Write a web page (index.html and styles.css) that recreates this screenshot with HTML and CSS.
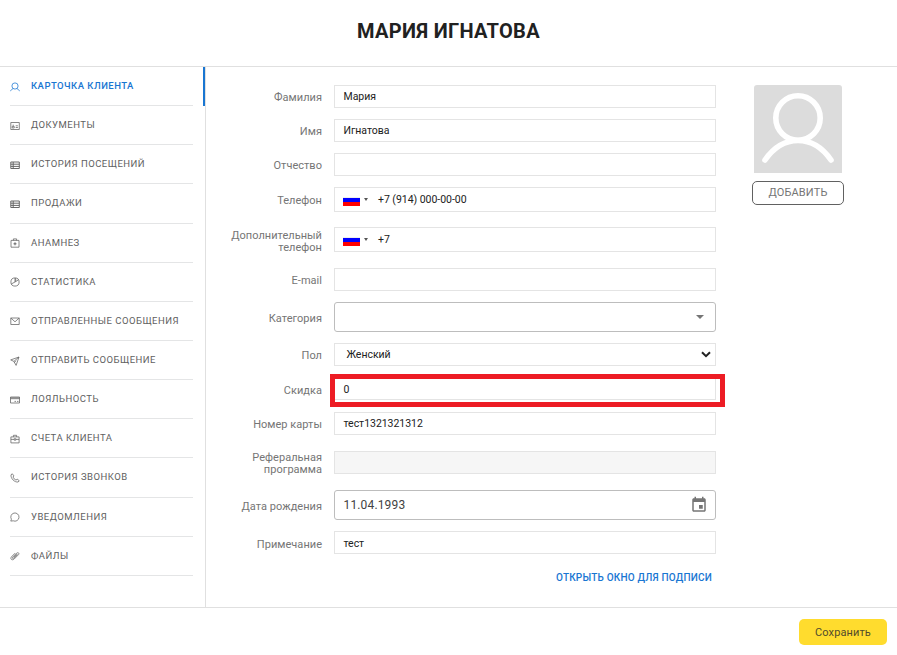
FILE: index.html
```html
<!DOCTYPE html>
<html lang="ru">
<head>
<meta charset="utf-8">
<title>Карточка клиента</title>
<link rel="stylesheet" href="styles.css">
</head>
<body>
<header class="header"><h1 class="title">МАРИЯ ИГНАТОВА</h1></header>
<main class="main">
  <nav class="sidebar">
    <a class="item active"><svg class="icon" viewBox="0 0 10 10"><circle cx="5" cy="4" r="3.100"/><path d="M.5 9.200c.4-1.300 1.500-2.200 2.800-2.500M9.500 9.200C9.100 7.900 8 7 6.700 6.700"/></svg><span>КАРТОЧКА КЛИЕНТА</span></a>
    <a class="item"><svg class="icon" viewBox="0 0 10 10"><path d="M.8 1.500h8.500v7H.8z"/><path d="M2.200 7V5.400h2V7zM3.200 3.600v1.600M5.700 4.800h2.200M5.700 6.500h2.200"/></svg><span>ДОКУМЕНТЫ</span></a>
    <a class="item"><svg class="icon heavy" viewBox="0 0 10 10"><path d="M.8 2h8.500v6.500H.8zM.8 4.200h8.500M.8 6.400h8.500M3.200 2v6.500"/></svg><span>ИСТОРИЯ ПОСЕЩЕНИЙ</span></a>
    <a class="item"><svg class="icon heavy" viewBox="0 0 10 10"><path d="M.8 2h8.500v6.500H.8zM.8 4.200h8.500M.8 6.400h8.500M3.200 2v6.500"/></svg><span>ПРОДАЖИ</span></a>
    <a class="item"><svg class="icon" viewBox="0 0 10 10"><path d="M1 2.400h8v6.800H1zM3.400 2.400V.9h3.200v1.500"/><path class="heavy" d="M5 4.300v3M3.500 5.800h3"/></svg><span>АНАМНЕЗ</span></a>
    <a class="item"><svg class="icon" viewBox="0 0 10 10"><circle cx="5" cy="5" r="4.100"/><path d="M5 1v4L1.200 7M5 5l3.500-2.200M5.700 1.200v3.100"/></svg><span>СТАТИСТИКА</span></a>
    <a class="item"><svg class="icon" viewBox="0 0 10 10"><path d="M.8 2h8.400v6.500H.8zM.8 2 5 5.800 9.200 2"/></svg><span>ОТПРАВЛЕННЫЕ СООБЩЕНИЯ</span></a>
    <a class="item"><svg class="icon" viewBox="0 0 10 10"><path d="M9 1 .7 3.900l3.200 1.500 2.200 4zM3.900 5.400 9 1M4.400 6.500l1.600-1.800"/></svg><span>ОТПРАВИТЬ СООБЩЕНИЕ</span></a>
    <a class="item"><svg class="icon" viewBox="0 0 10 10"><path d="M.5 2h9v6h-9zM.5 2.800h9M.5 3.700h9M4.500 6.400H6M7 6.400h1.500"/></svg><span>ЛОЯЛЬНОСТЬ</span></a>
    <a class="item"><svg class="icon" viewBox="0 0 10 10"><path d="M.9 2.900h8.200v6H.9zM3.400 2.900V1.300h3.200v1.600M.9 5.400h3M6.100 5.400h3M4 4.800h2v1.300H4z"/></svg><span>СЧЕТА КЛИЕНТА</span></a>
    <a class="item"><svg class="icon" viewBox="0 0 10 10"><path d="M2.300.8 1 1.800C.6 5.500 4.500 9.500 8.200 9l1-1.300-2-1.500-1.200.9C4.700 6.500 3.500 5.300 3 4l.9-1.100z"/></svg><span>ИСТОРИЯ ЗВОНКОВ</span></a>
    <a class="item"><svg class="icon" viewBox="0 0 10 10"><path d="M.8 9.100 1.400 7.200A4.100 4.100 0 1 1 3.200 8.800z"/></svg><span>УВЕДОМЛЕНИЯ</span></a>
    <a class="item"><svg class="icon" viewBox="0 0 10 10"><path d="M7.600 3.300 3.700 7.200C2.700 8 1.900 7 2.700 6.100L6.600 2.200C8.200.8 9.700 2.400 8.400 3.800L4.200 8C2 10-.2 7.800 1.500 5.800L5.200 2.100M3.700 6.200l3.100-3.100"/></svg><span>ФАЙЛЫ</span></a>
  </nav>
  <section class="form">
    <div class="row"><label>Фамилия</label><div class="field">Мария</div></div>
    <div class="row"><label>Имя</label><div class="field">Игнатова</div></div>
    <div class="row"><label>Отчество</label><div class="field"></div></div>
    <div class="row phone"><label>Телефон</label><div class="field"><i class="flag"></i><i class="caret"></i>+7 (914) 000-00-00</div></div>
    <div class="row phone second"><label>Дополнительный телефон</label><div class="field"><i class="flag"></i><i class="caret"></i>+7</div></div>
    <div class="row email"><label>E-mail</label><div class="field"></div></div>
    <div class="row outlined"><label>Категория</label><div class="field"><i class="drop"></i></div></div>
    <div class="row gender"><label>Пол</label><div class="field">Женский<svg class="chevron" viewBox="0 0 10 7"><path d="m1 1.200 4 4 4-4"/></svg></div></div>
    <div class="row discount"><label>Скидка</label><div class="field">0</div><div class="highlight"></div></div>
    <div class="row card"><label>Номер карты</label><div class="field">тест1321321312</div></div>
    <div class="row referral"><label>Реферальная программа</label><div class="field"></div></div>
    <div class="row outlined birth"><label>Дата рождения</label><div class="field">11.04.1993<svg class="calendar" viewBox="0 0 24 24"><path d="M17 12h-5v5h5v-5zM16 1v2H8V1H6v2H5c-1.100 0-2 .9-2 2v14c0 1.100.9 2 2 2h14c1.100 0 2-.9 2-2V5c0-1.100-.9-2-2-2h-1V1h-2zm3 18H5V8h14v11z"/></svg></div></div>
    <div class="row note"><label>Примечание</label><div class="field">тест</div></div>
    <a class="signature">ОТКРЫТЬ ОКНО ДЛЯ ПОДПИСИ</a>
  </section>
  <aside class="profile">
    <svg class="avatar" viewBox="0 0 88 88"><circle cx="44" cy="33" r="22.200"/><path d="M11 75C29 49 59 49 77 75"/></svg>
    <button class="add">ДОБАВИТЬ</button>
  </aside>
</main>
<footer class="footer"><button class="save">Сохранить</button></footer>
</body>
</html>
```
FILE: styles.css
```css
* { box-sizing: border-box; }
body { margin: 0; width: 897px; height: 655px; overflow: hidden; background: #fff; font-family: Roboto, "Liberation Sans", sans-serif; color: #212121; }
.header { height: 67px; border-bottom: 1px solid #e0e0e0; padding-top: 18px; text-align: center; }
.title { margin: 0; font-size: 20px; line-height: 26px; font-weight: 700; letter-spacing: .3px; }
.main { display: flex; height: 541px; border-bottom: 1px solid #e0e0e0; }
.sidebar { width: 206px; border-right: 1px solid #e0e0e0; padding-right: 12px; }
.item { display: flex; align-items: center; position: relative; height: 39.15px; margin-left: 10px; width: 183px; border-bottom: 1px solid #e4e5e6; padding-bottom: 1px; font-size: 9.5px; letter-spacing: .48px; color: #616161; white-space: nowrap; }
.item.active { color: #1976d2; font-weight: 500; }
.item.active::after { content: ""; position: absolute; left: 193px; top: 0; width: 2px; height: 39px; background: #1976d2; }
.icon { width: 10px; height: 10px; margin-right: 11px; flex: none; fill: none; stroke: currentColor; stroke-width: .75; margin-top: 2px; }
.heavy { stroke-width: .95; }
.form { width: 510px; padding-top: 18px; }
.row { display: grid; grid-template-columns: 116px 382px; grid-template-rows: 100%; column-gap: 12px; align-items: center; height: 23px; margin-bottom: 11px; position: relative; }
.row label { text-align: right; font-size: 11px; line-height: 12px; letter-spacing: .03px; color: #757575; padding-top: 2px; }
.field { display: flex; align-items: center; height: 100%; border: 1px solid #e4e4e4; padding: 0 9px 0 8.5px; font-size: 10.5px; letter-spacing: -.03px; }
.phone { height: 25px; margin-bottom: 15px; }
.phone .field { padding-left: 8px; }
.second { margin-bottom: 16px; }
.second label { margin: 0 0 0 -20px; padding-top: 4px; }
.flag { width: 17px; height: 9px; margin: 4px 4px 0 0; background: linear-gradient(#eee 0 1px, #00f 1px 5px, #f00 5px); }
.caret { border: 2px solid transparent; border-top: 3px solid #555; border-bottom: 0; margin: -1px 10px 0 0; }
.outlined { height: 30px; }
.row.outlined label, .row.discount label, .row.note label { padding-top: 4px; }
.outlined .field { border-color: #bdbdbd; border-radius: 3px; }
.drop { border: 4px solid transparent; border-top-color: #757575; border-bottom: 0; margin: 0 2px 0 auto; }
.gender .field { padding: 0 4px 0 11.5px; }
.chevron { width: 10px; height: 7px; margin-left: auto; fill: none; stroke: #212121; stroke-width: 2; }
.highlight { position: absolute; left: 124px; top: -3px; width: 395px; height: 33px; border: 5px solid #ed1c24; }
.discount .field { padding-top: 2px; }
.discount { margin-bottom: 12px; }
.card { margin-bottom: 16px; }
.referral { margin-bottom: 16px; }
.referral .field { background: #f6f6f6; }
.note .field { padding-top: 1px; }
.birth .field { font-size: 12px; letter-spacing: .15px; color: #424242; padding-right: 7px; }
.calendar { width: 18px; height: 18px; margin-left: auto; fill: #757575; }
.signature { display: block; width: 506px; text-align: right; margin-top: 17px; font-size: 10px; line-height: 14px; letter-spacing: .2px; font-weight: 500; color: #1976d2; }
.profile { display: flex; flex-direction: column; align-items: center; width: 92px; margin-left: 36px; padding-top: 18px; }
.avatar { width: 88px; height: 88px; background: #dcdcdc; border-radius: 3px 3px 0 0; fill: none; stroke: #fff; stroke-width: 5.6; stroke-linecap: round; }
.add { width: 92px; height: 24px; margin-top: 8px; padding: 0 0 2px; border: 1px solid #616161; border-radius: 5px; background: #fff; color: #757575; font: 11px Roboto, sans-serif; letter-spacing: .15px; }
.footer { display: flex; justify-content: flex-end; padding: 11px 10px; }
.save { width: 88px; height: 26px; border: 0; border-radius: 5px; padding: 0; background: #ffdc2e; color: #514b2c; font: 11px Roboto, sans-serif; letter-spacing: .1px; }
```
